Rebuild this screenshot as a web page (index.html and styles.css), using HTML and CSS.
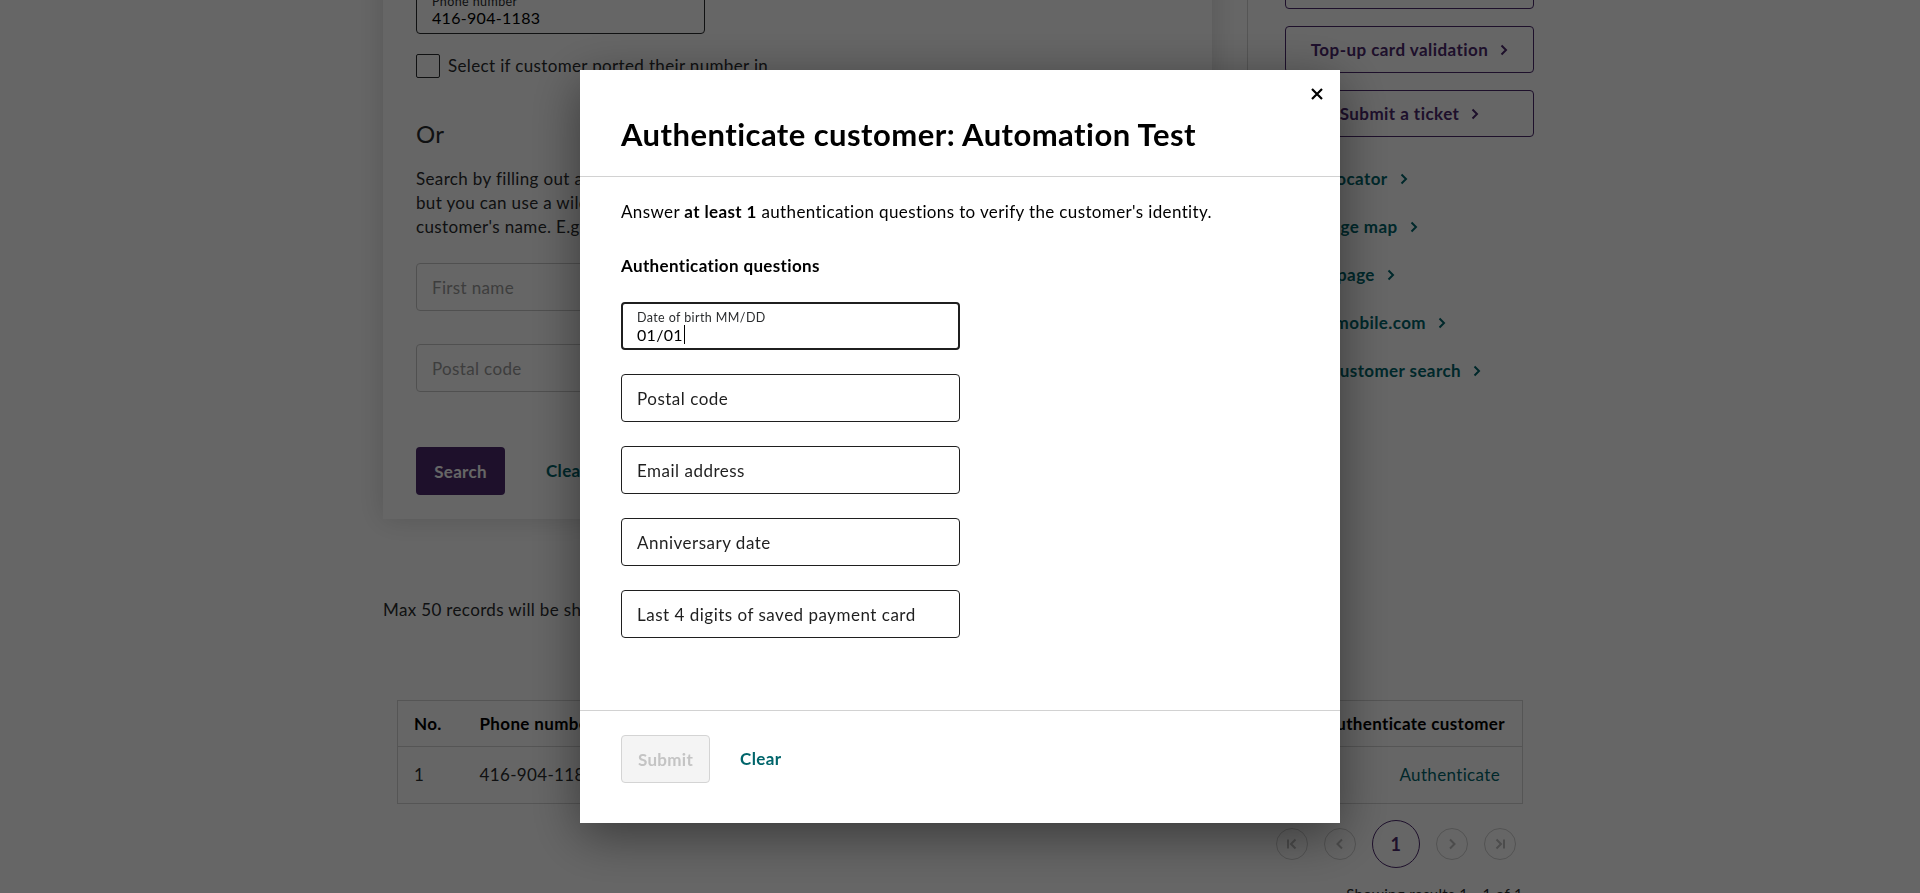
FILE: index.html
```html
<!DOCTYPE html>
<html lang="en">
<head>
<meta charset="utf-8">
<title>Customer search</title>
<link rel="stylesheet" href="styles.css">
</head>
<body>
<div class="page">
  <div class="top">
    <section class="card">
      <div class="field bg-field">
        <span class="field-label">Phone number</span>
        <span class="field-value">416-904-1183</span>
      </div>
      <label class="check"><span class="box"></span>Select if customer ported their number in</label>
      <h2 class="or">Or</h2>
      <p class="hint">Search by filling out at least two of the fields below. Names must be exact,<br>but you can use a wildcard (*) at the end of a name to search part of the<br>customer's name. E.g. Jo* returns John, Joan and Joseph.</p>
      <input class="bg-input" type="text" placeholder="First name">
      <input class="bg-input second" type="text" placeholder="Postal code">
      <div class="actions">
        <button class="btn-primary" type="button">Search</button>
        <a class="link" href="#">Clear</a>
      </div>
    </section>
    <aside class="sidebar">
      <a class="side-btn" href="#">Order a SIM card <svg class="chev" viewBox="0 0 8 12" width="8" height="12"><path d="M1.5 1.5 6 6l-4.5 4.5"/></svg></a>
      <a class="side-btn" href="#">Top-up card validation <svg class="chev" viewBox="0 0 8 12" width="8" height="12"><path d="M1.5 1.5 6 6l-4.5 4.5"/></svg></a>
      <a class="side-btn" href="#">Submit a ticket <svg class="chev" viewBox="0 0 8 12" width="8" height="12"><path d="M1.5 1.5 6 6l-4.5 4.5"/></svg></a>
      <ul class="side-links">
        <li><a href="#">Store locator <svg class="chev" viewBox="0 0 8 12" width="8" height="12"><path d="M1.5 1.5 6 6l-4.5 4.5"/></svg></a></li>
        <li><a href="#">Coverage map <svg class="chev" viewBox="0 0 8 12" width="8" height="12"><path d="M1.5 1.5 6 6l-4.5 4.5"/></svg></a></li>
        <li><a href="#">Home page <svg class="chev" viewBox="0 0 8 12" width="8" height="12"><path d="M1.5 1.5 6 6l-4.5 4.5"/></svg></a></li>
        <li><a href="#">koodomobile.com <svg class="chev" viewBox="0 0 8 12" width="8" height="12"><path d="M1.5 1.5 6 6l-4.5 4.5"/></svg></a></li>
        <li><a href="#">Basic customer search <svg class="chev" viewBox="0 0 8 12" width="8" height="12"><path d="M1.5 1.5 6 6l-4.5 4.5"/></svg></a></li>
      </ul>
    </aside>
  </div>

  <p class="max">Max 50 records will be shown. Refine your search if you can't find the customer.</p>

  <table class="results">
    <thead>
      <tr>
        <th class="c-no">No.</th>
        <th class="c-phone">Phone number</th>
        <th class="c-name">Customer name</th>
        <th class="c-acct">Account status</th>
        <th class="c-auth">Authenticate customer</th>
      </tr>
    </thead>
    <tbody>
      <tr>
        <td class="c-no">1</td>
        <td class="c-phone">416-904-1183</td>
        <td class="c-name">Automation Test</td>
        <td class="c-acct">Active</td>
        <td class="c-auth"><a href="#">Authenticate</a></td>
      </tr>
    </tbody>
  </table>

  <nav class="pager">
    <span class="pg"><svg viewBox="0 0 16 16" width="16" height="16"><path d="M4 3.5v9M11.5 3.5 7 8l4.5 4.5"/></svg></span>
    <span class="pg"><svg viewBox="0 0 16 16" width="16" height="16"><path d="M10 3.5 5.5 8l4.5 4.5"/></svg></span>
    <span class="pg current">1</span>
    <span class="pg"><svg viewBox="0 0 16 16" width="16" height="16"><path d="M6 3.5 10.5 8 6 12.5"/></svg></span>
    <span class="pg"><svg viewBox="0 0 16 16" width="16" height="16"><path d="M4.5 3.5 9 8l-4.5 4.5M12 3.5v9"/></svg></span>
  </nav>
  <p class="showing">Showing results 1 - 1 of 1</p>
</div>

<div class="overlay">
  <div class="modal" role="dialog" aria-labelledby="modal-title">
    <button class="close" type="button" aria-label="Close">
      <svg viewBox="0 0 12 12" width="12" height="12"><path d="M1 1l10 10M11 1 1 11"/></svg>
    </button>
    <header class="modal-header">
      <h1 class="modal-title" id="modal-title">Authenticate customer: Automation Test</h1>
    </header>
    <div class="modal-body">
      <p class="intro">Answer <strong>at least 1</strong> authentication questions to verify the customer's identity.</p>
      <h3 class="q-heading">Authentication questions</h3>
      <div class="fields">
        <div class="field focused">
          <span class="field-label">Date of birth MM/DD</span>
          <span class="field-value">01/01<span class="caret"></span></span>
        </div>
        <input class="q-input" type="text" placeholder="Postal code">
        <input class="q-input" type="text" placeholder="Email address">
        <input class="q-input" type="text" placeholder="Anniversary date">
        <input class="q-input" type="text" placeholder="Last 4 digits of saved payment card">
      </div>
    </div>
    <footer class="modal-footer">
      <button class="btn-disabled" type="button" disabled>Submit</button>
      <a class="link" href="#">Clear</a>
    </footer>
  </div>
</div>
</body>
</html>
```

FILE: styles.css
```css
* { box-sizing: border-box; }

html, body { overflow: hidden; }

body {
  margin: 0;
  font-family: Lato, "Noto Sans", sans-serif;
  font-size: 17px;
  line-height: 24px;
  letter-spacing: 0.35px;
  color: #2a2c2e;
  background: #fff;
}

a { text-decoration: none; }

/* ---------- background page ---------- */
.page {
  width: 1154px;
  margin: -60px auto 0;
}

.top {
  display: flex;
  align-items: stretch;
}

.card {
  width: 829px;
  padding: 46px 33px 24px;
  background: #fff;
  box-shadow: 0 0 26px rgba(0, 0, 0, 0.16);
}

.field {
  display: flex;
  flex-direction: column;
  height: 48px;
  border: 1px solid #2a2c2e;
  border-radius: 4px;
  padding: 8px 15px 0;
}

.bg-field { width: 289px; }

.field-label {
  font-size: 12.5px;
  line-height: 14px;
  letter-spacing: 0.4px;
  color: #2a2c2e;
}

.field-value {
  font-size: 16px;
  line-height: 18px;
  letter-spacing: 0.3px;
  color: #000;
  display: flex;
  align-items: center;
}

.check {
  display: flex;
  align-items: center;
  gap: 8px;
  margin-top: 20px;
  height: 24px;
  color: #2a2c2e;
}

.box {
  width: 24px;
  height: 24px;
  border: 1px solid #2a2c2e;
  border-radius: 2px;
}

.or {
  margin: 40px 0 0;
  font-size: 24px;
  line-height: 32px;
  font-weight: 400;
  color: #2a2c2e;
}

.hint {
  margin: 17px 0 0;
  white-space: nowrap;
}

.bg-input {
  display: block;
  width: 350px;
  height: 48px;
  margin-top: 24px;
  padding: 0 15px;
  border: 1px solid #c8c8c8;
  border-radius: 4px;
  font-family: inherit;
  font-size: 17px;
  letter-spacing: 0.35px;
}

.bg-input.second { margin-top: 33px; }

.bg-input::placeholder { color: #9a9a9a; }

.actions {
  display: flex;
  align-items: center;
  gap: 41px;
  margin-top: 55px;
}

.btn-primary {
  height: 48px;
  width: 89px;
  border: 0;
  border-radius: 4px;
  background: #4b286d;
  color: #fff;
  font-family: inherit;
  font-size: 17px;
  font-weight: 700;
  letter-spacing: 0.3px;
}

.link {
  color: #00656b;
  font-weight: 700;
}

.sidebar {
  margin-left: 35px;
  border-left: 1px solid #d4d4d4;
  padding: 22px 0 0 37px;
  display: flex;
  flex-direction: column;
  gap: 17px;
}

.side-btn {
  display: flex;
  align-items: center;
  justify-content: center;
  gap: 12px;
  width: 249px;
  height: 47px;
  padding: 0 16px;
  border: 1px solid #4b286d;
  border-radius: 4px;
  color: #4b286d;
  font-weight: 700;
  letter-spacing: 0.45px;
}

.chev {
  fill: none;
  stroke: currentColor;
  stroke-width: 2;
  flex: none;
}

.side-links {
  list-style: none;
  margin: 1px 0 0;
  padding: 0;
}

.side-links a {
  display: flex;
  align-items: center;
  gap: 12px;
  padding: 12px 0;
  color: #00656b;
  font-weight: 700;
  letter-spacing: 0.4px;
  white-space: nowrap;
}

.max {
  margin: 79px 0 0;
  color: #2a2c2e;
}

.results {
  width: 1126px;
  margin: 78px 0 0 14px;
  border-collapse: collapse;
  border: 1px solid #d4d4d4;
}

.results th,
.results td {
  text-align: left;
  padding: 0 16px;
  border-bottom: 1px solid #d4d4d4;
  white-space: nowrap;
}

.results th {
  height: 46px;
  font-weight: 700;
  color: #000;
}

.results td {
  height: 57px;
  color: #2a2c2e;
}

.c-no { width: 66px; }
.c-phone { width: 200px; }
.c-name { width: 300px; }
.c-acct { width: 260px; }

.results .c-auth { text-align: right; }
.results th.c-auth { padding-right: 17px; }
.results td.c-auth { padding-right: 22px; }
.results td.c-auth a { color: #00656b; }

.pager {
  display: flex;
  justify-content: flex-end;
  align-items: center;
  gap: 16px;
  margin: 16px 21px 0 0;
  height: 48px;
}

.pg {
  width: 32px;
  height: 32px;
  border: 1px solid #cfcfcf;
  border-radius: 50%;
  display: flex;
  align-items: center;
  justify-content: center;
  color: #bdbdbd;
}

.pg svg {
  fill: none;
  stroke: currentColor;
  stroke-width: 2;
}

.pg.current {
  width: 48px;
  height: 48px;
  border-color: #4b286d;
  color: #4b286d;
  font-weight: 700;
  font-size: 18px;
}

.showing {
  margin: 14px 0 0;
  text-align: right;
  width: 1140px;
  font-size: 15px;
}

/* ---------- modal ---------- */
.overlay {
  position: fixed;
  inset: 0;
  background: rgba(0, 0, 0, 0.6);
  display: flex;
  align-items: center;
  justify-content: center;
}

.modal {
  position: relative;
  width: 760px;
  height: 753px;
  background: #fff;
  display: flex;
  flex-direction: column;
  box-shadow: 0 12px 48px rgba(0, 0, 0, 0.45);
  color: #000;
}

.close {
  position: absolute;
  top: 12px;
  right: 11px;
  width: 24px;
  height: 24px;
  padding: 0;
  border: 0;
  background: none;
  display: flex;
  align-items: center;
  justify-content: center;
}

.close svg {
  fill: none;
  stroke: #000;
  stroke-width: 2.2;
}

.modal-header {
  padding: 46px 41px 24px;
  border-bottom: 1px solid #d2d2d2;
}

.modal-title {
  margin: 0;
  font-size: 31px;
  line-height: 36px;
  font-weight: 700;
  letter-spacing: 0.45px;
  color: #000;
}

.modal-body {
  flex: 1;
  padding: 23px 41px 0;
}

.intro {
  margin: 0;
  color: #000;
  letter-spacing: 0.37px;
}

.intro strong { font-weight: 700; }

.q-heading {
  margin: 30px 0 24px;
  font-size: 17px;
  line-height: 24px;
  font-weight: 700;
  color: #000;
}

.fields {
  display: flex;
  flex-direction: column;
  gap: 24px;
  width: 339px;
}

.field.focused {
  border: 2px solid #1f1f1f;
  padding: 7px 14px 0;
}

.caret {
  display: inline-block;
  width: 1px;
  height: 19px;
  margin-left: 1px;
  background: #000;
}

.q-input {
  display: block;
  width: 339px;
  height: 48px;
  padding: 0 15px;
  border: 1px solid #1f1f1f;
  border-radius: 4px;
  font-family: inherit;
  font-size: 17px;
  letter-spacing: 0.5px;
  color: #000;
  background: #fff;
}

.q-input::placeholder { color: #1f1f1f; opacity: 1; }

.modal-footer {
  border-top: 1px solid #d2d2d2;
  padding: 24px 41px 40px;
  display: flex;
  align-items: center;
  gap: 30px;
}

.btn-disabled {
  height: 48px;
  padding: 0 16px;
  border: 1px solid #d4d4d4;
  border-radius: 4px;
  background: #f4f4f4;
  color: #c4c4c4;
  font-family: inherit;
  font-size: 17px;
  font-weight: 700;
  letter-spacing: 0.3px;
}
```
